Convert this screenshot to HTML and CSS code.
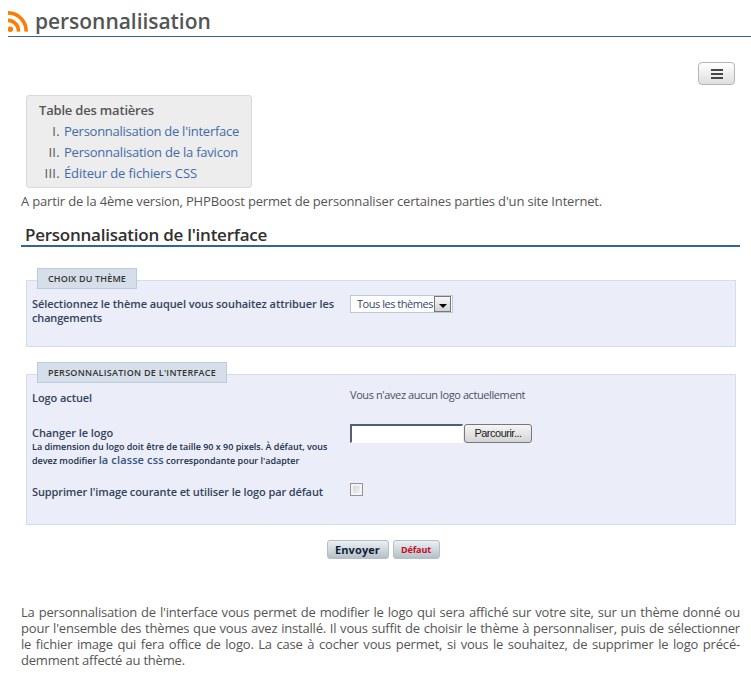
FILE: index.html
```html
<!DOCTYPE html>
<html lang="fr">
<head>
<meta charset="utf-8">
<title>personnaliisation</title>
<link rel="stylesheet" href="styles.css">
</head>
<body>
<header class="page-header">
  <svg class="feed-icon" width="20" height="21" viewBox="0 0 20 21" fill="none" stroke="#fa7d05">
    <circle cx="2.4" cy="18.2" r="2.7" fill="#fa7d05" stroke="none"/>
    <path d="M0 9.4A10.4 10.4 0 0 1 10.4 20.6M0 1.9A18 18 0 0 1 18.1 20.6" stroke-width="3.6"/>
  </svg>
  <h1>personnaliisation</h1>
</header>
<div class="toolbar">
  <button class="menu-button" type="button"><svg width="12" height="10" viewBox="0 0 12 10" fill="#454545"><path d="M0 0h12v2H0zM0 4h12v2H0zM0 8h12v2H0z"/></svg></button>
</div>
<main>
  <nav class="toc">
    <div class="toc-title">Table des matières</div>
    <div class="toc-row"><span class="num">I.</span><a class="toc-a">Personnalisation de l'interface</a></div>
    <div class="toc-row"><span class="num">II.</span><a class="toc-b">Personnalisation de la favicon</a></div>
    <div class="toc-row"><span class="num">III.</span><a class="toc-c">Éditeur de fichiers CSS</a></div>
  </nav>
  <p class="intro">A partir de la 4ème version, PHPBoost permet de personnaliser certaines parties d'un site Internet.</p>
  <h2>Personnalisation de l'interface</h2>
  <form class="settings">
    <section class="box box-theme">
      <h3 class="legend-theme">CHOIX DU THÈME</h3>
      <div class="row row-theme">
        <div class="label">Sélectionnez le thème auquel vous souhaitez attribuer les<br><span class="tight">changements</span></div>
        <div class="select"><span>Tous les thèmes</span><i class="arrow"><svg width="8" height="4" viewBox="0 0 8 4"><path d="M0 0h8L4 4z"/></svg></i></div>
      </div>
    </section>
    <section class="box box-interface">
      <h3 class="legend-interface">PERSONNALISATION DE L'INTERFACE</h3>
      <div class="row row-current">
        <div class="label">Logo actuel</div>
        <div class="value">Vous n'avez aucun logo actuellement</div>
      </div>
      <div class="row row-change">
        <div class="label">Changer le logo
          <div class="hint">La dimension du logo doit être de taille 90 x 90 pixels. À défaut, vous<br>devez modifier <a>la classe css</a> correspondante pour l'adapter</div>
        </div>
        <div class="file"><span class="file-input"></span><span class="browse">Parcourir...</span></div>
      </div>
      <div class="row">
        <div class="label label-remove">Supprimer l'image courante et utiliser le logo par défaut</div>
        <span class="check"></span>
      </div>
    </section>
    <div class="actions"><button type="button" class="send">Envoyer</button><button type="button" class="reset">Défaut</button></div>
  </form>
  <p class="outro">
    <span>La personnalisation de l'interface vous permet de modifier le logo qui sera affiché sur votre site, sur un thème donné ou</span>
    <span>pour l'ensemble des thèmes que vous avez installé. Il vous suffit de choisir le thème à personnaliser, puis de sélectionner</span>
    <span>le fichier image qui fera office de logo. La case à cocher vous permet, si vous le souhaitez, de supprimer le logo précé-</span>
    <span class="last">demment affecté au thème.</span>
  </p>
</main>
</body>
</html>
```
FILE: styles.css
```css
* { box-sizing: border-box; }
body {
  margin: 0;
  height: 673px;
  overflow: hidden;
  background: #fff;
  color: #555;
  font: 13px/16px "Open Sans", "Noto Sans", sans-serif;
}
h1, h2, h3, p { margin: 0; }
button { padding: 0; font-family: inherit; }

.page-header {
  display: flex;
  height: 37px;
  margin-left: 8px;
  padding-top: 11px;
  border-bottom: 1px solid #366393;
}
.feed-icon { flex: none; margin-right: 7px; }
h1 { margin-top: -4px; font-size: 21px; line-height: 28px; font-weight: 600; letter-spacing: -.04px; color: #555; white-space: nowrap; }

.toolbar { display: flex; justify-content: flex-end; height: 58px; padding: 25px 16px 0 0; }
.menu-button {
  display: flex;
  align-items: center;
  justify-content: center;
  width: 37px;
  height: 23px;
  border: 1px solid #b5b5b5;
  border-radius: 4px;
  background: linear-gradient(#fff, #dedede);
}

main { padding: 0 11px 0 21px; }
.toc {
  width: 226px;
  height: 93px;
  margin-left: 5px;
  padding: 4px 0 0 12px;
  border: 1px solid #d9d9d9;
  border-radius: 3px;
  background: #ededed;
  white-space: nowrap;
}
.toc-title { height: 21px; font-weight: 600; line-height: 20px; letter-spacing: -.19px; }
.toc-row { display: flex; gap: 4px; line-height: 21px; }
.num { width: 21px; text-align: right; letter-spacing: .3px; }
.toc a { color: #416cab; }
.toc-a { letter-spacing: -.26px; }
.toc-b { letter-spacing: -.22px; }
.toc-c { letter-spacing: -.11px; }
.intro { margin-top: 5px; letter-spacing: -.166px; white-space: nowrap; }
h2 {
  height: 25px;
  margin-top: 13px;
  padding-left: 4px;
  border-bottom: 2px solid #366393;
  color: #303030;
  font-size: 17px;
  line-height: 26px;
  font-weight: 600;
  letter-spacing: -.247px;
}

.settings { padding: 33px 4px 0 5px; }
.box { display: flex; flex-direction: column; padding-left: 5px; border: 1px solid #d3ddeb; background: #ebedf9; white-space: nowrap; }
.box-theme { height: 67px; }
.box-interface { height: 151px; margin-top: 27px; }
h3 {
  align-self: flex-start;
  flex: none;
  height: 21px;
  margin: -13px 0 0 5px;
  padding-left: 10px;
  border: 1px solid #b8cce0;
  background: #d6dfe9;
  color: #333;
  font-size: 9px;
  line-height: 19px;
  font-weight: 600;
}
.legend-theme { width: 100px; letter-spacing: .14px; }
.legend-interface { width: 190px; letter-spacing: .278px; }
.row { display: flex; flex: none; }
.row-theme { padding-top: 8px; }
.label { width: 318px; color: #33435a; font-size: 11px; line-height: 14px; font-weight: 600; letter-spacing: -.078px; }
.tight { letter-spacing: -.16px; }
.label-remove { letter-spacing: -.116px; }
.hint { color: #20304a; font-size: 9px; line-height: 14px; letter-spacing: -.01px; }
.hint a { font-size: 11px; line-height: 12px; color: #34557f; letter-spacing: .13px; }
.select {
  display: flex;
  width: 103px;
  height: 18px;
  margin-top: -2px;
  padding-left: 6px;
  border: 1px solid #b9c9d8;
  background: #fff;
  color: #34486e;
  font-size: 11px;
  line-height: 16px;
  letter-spacing: -.468px;
}
.select span { width: 77px; }
.arrow { display: flex; align-items: center; justify-content: center; width: 17px; height: 16px; padding-top: 3px; border: 1px solid #777; background: linear-gradient(#f8f8f8, #d2d2d2); }
.row-current { height: 43px; padding-top: 8px; }
.value { margin-top: -3px; color: #4b5261; font-size: 11px; line-height: 14px; letter-spacing: -.408px; }
.row-change { height: 59px; }
.file { display: flex; gap: 1px; margin-top: -2px; }
.file-input { width: 113px; height: 19px; border: 1px solid #fff; border-top: 2px solid #53606f; border-left: 2px solid #53606f; background: #fff; }
.browse {
  width: 68px;
  height: 19px;
  border: 1px solid #777;
  border-radius: 3px;
  background: linear-gradient(#f5f5f5, #d4d4d4);
  color: #222;
  font: 11px/17px "Liberation Sans", sans-serif;
  letter-spacing: -.5px;
  text-align: center;
}
.check { width: 13px; height: 13px; margin-top: -2px; border: 1px solid #949494; background: linear-gradient(135deg, #ccd0d6, #f8f8f8); box-shadow: inset 0 0 0 2px #f4f4f4; }

.actions { display: flex; justify-content: center; gap: 4px; margin-top: 15px; padding-left: 4px; }
.actions button { height: 19px; border: 1px solid #b3bec5; border-radius: 3px; background: linear-gradient(#eaf0f4, #b5c0c6); line-height: 18px; }
.actions .send { width: 62px; color: #111c38; font-size: 11px; font-weight: 700; letter-spacing: .1px; }
.actions .reset { width: 47px; color: #c60d25; font-size: 9px; font-weight: 700; letter-spacing: -.1px; }

.outro { margin-top: 45px; }
.outro span { display: block; letter-spacing: -.19px; text-align: justify; text-align-last: justify; white-space: normal; }
.outro .last { text-align-last: left; }
```
